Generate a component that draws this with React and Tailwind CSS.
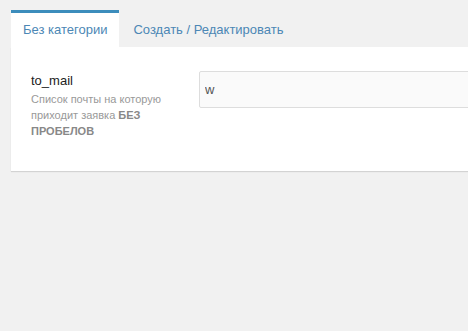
import React from 'react';

const App = () => {
  return (
    <div className="h-[331px] w-[468px] overflow-hidden bg-[#f1f1f1] pl-[11px] pt-[10px] font-['Liberation_Sans',Arial,sans-serif]">
      <div className="w-[620px]">
        {/* Tabs */}
        <div className="flex items-stretch">
          <div className="flex h-[37px] items-center border-t-[3px] border-[#3c8dbc] bg-white px-[12px] text-[13px] text-[#4c87b5]">
            Без категории
          </div>
          <div className="flex h-[37px] items-center px-[14px] pt-[3px] text-[13px] text-[#4c87b5]">
            Создать / Редактировать
          </div>
        </div>

        {/* Panel */}
        <div className="flex bg-white px-[20px] pb-[32px] pt-[24px] shadow-[0_1px_1px_rgba(0,0,0,0.12)]">
          <div className="w-[168px] pt-[2px]">
            <div className="text-[13px] leading-[16px] text-[#222]">to_mail</div>
            <div className="mt-[2px] w-[140px] text-[11px] leading-[16px] text-[#999]">
              Список почты на которую приходит заявка <b className="font-bold text-[#888]">БЕЗ ПРОБЕЛОВ</b>
            </div>
          </div>
          <div className="flex-1">
            <input
              type="text"
              defaultValue="w"
              className="h-[37px] w-full rounded-[2px] border border-[#ddd] bg-[#fafafa] px-[5px] text-[13px] text-[#555] outline-none"
            />
          </div>
        </div>
      </div>
    </div>
  );
};

export default App;
